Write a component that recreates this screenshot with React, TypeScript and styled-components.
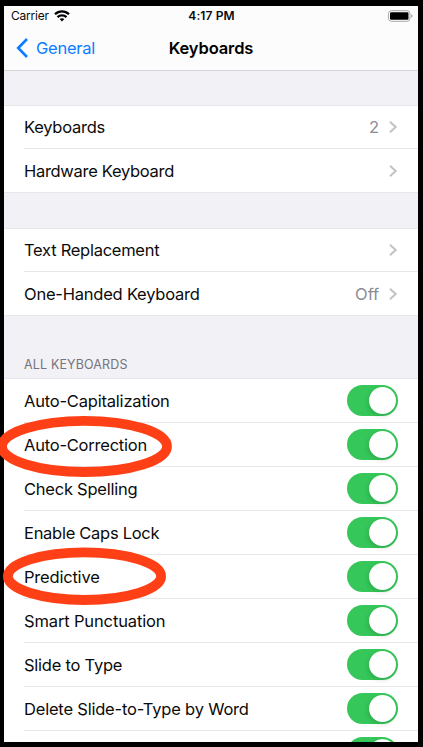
import React from "react";
import styled, { createGlobalStyle } from "styled-components";

const GlobalStyle = createGlobalStyle`
  * { box-sizing: border-box; }
  body { margin: 0; background: #000; font-family: Inter, "Liberation Sans", sans-serif; }
`;

const Frame = styled.div`
  position: relative;
  width: 423px;
  height: 747px;
  padding: 6px 5px 5px 4px;
  overflow: hidden;
  background: #000;
`;

const Screen = styled.main`
  display: flex;
  flex-direction: column;
  height: 736px;
  overflow: hidden;
  background: #f2f1f6;
  color: #0b0b0b;
`;

const Header = styled.header`
  flex: none;
  height: 65px;
  background: #fcfcfd;
  border-bottom: 1px solid #d6d5da;
`;

const StatusBar = styled.div`
  display: grid;
  grid-template-columns: 1fr auto 1fr;
  align-items: center;
  height: 20px;
  padding: 0 5px 0 7px;
`;

const Carrier = styled.div`
  display: flex;
  align-items: center;
  gap: 5px;
  font-size: 12px;
  line-height: 20px;
  letter-spacing: -0.2px;
`;

const Clock = styled.div`
  margin-left: -1px;
  font-size: 12px;
  font-weight: 600;
  line-height: 20px;
  letter-spacing: 0.1px;
`;

const Battery = styled.svg`
  justify-self: end;
`;

const NavBar = styled.nav`
  display: grid;
  grid-template-columns: 1fr auto 1fr;
  align-items: center;
  height: 44px;
  padding-left: 12px;
  padding-right: 12px;
`;

const Back = styled.div`
  display: flex;
  align-items: center;
  gap: 8px;
  font-size: 16.5px;
  line-height: 22px;
  letter-spacing: -0.25px;
  color: #0a7cff;
`;

const Title = styled.h1`
  margin: 0;
  font-size: 16.5px;
  font-weight: 600;
  line-height: 22px;
  letter-spacing: -0.12px;
  color: #000;
`;

const Group = styled.section<{ $top: number }>`
  flex: none;
  margin-top: ${(p) => p.$top}px;
  background: #fff;
  border-top: 1px solid #e7e6eb;
  border-bottom: 1px solid #e7e6eb;
`;

const SectionTitle = styled.h2`
  flex: none;
  height: 62px;
  margin: 0;
  padding: 39px 20px 0;
  font-size: 12.5px;
  font-weight: 400;
  line-height: 20px;
  letter-spacing: 0.15px;
  color: #75747a;
`;

const Row = styled.div<{ $height?: number }>`
  display: flex;
  align-items: center;
  justify-content: space-between;
  height: ${(p) => p.$height ?? 44}px;
  margin-left: 20px;
  padding-right: 20px;
  & + & { border-top: 1px solid #e7e7e9; }
`;

const Label = styled.span<{ $spacing: number }>`
  font-size: 16.5px;
  line-height: 22px;
  letter-spacing: ${(p) => p.$spacing}px;
  white-space: nowrap;
`;

const Value = styled.span`
  display: flex;
  align-items: center;
  gap: 9px;
  font-size: 16.5px;
  line-height: 22px;
  letter-spacing: -0.1px;
  color: #8b8b90;
`;

const Switch = styled.span`
  display: flex;
  justify-content: flex-end;
  width: 51px;
  height: 31px;
  padding: 2px;
  border-radius: 16px;
  background: #35c759;
`;

const Knob = styled.span`
  width: 27px;
  height: 27px;
  border-radius: 50%;
  background: #fff;
  box-shadow: -1px 2px 5px rgba(0, 0, 0, 0.15);
`;

const Ring = styled.svg`
  position: absolute;
  left: 0;
  top: 0;
  pointer-events: none;
`;

const Chevron = () => (
  <svg width="10" height="14" viewBox="0 0 10 14" fill="none" stroke="#c2c2c5" strokeWidth="2">
    <path d="M2 1.8 7.7 7 2 12.2" />
  </svg>
);

const Wifi = () => (
  <svg width="16" height="12" viewBox="0 0 16 12" fill="none" stroke="#000" strokeWidth="2.2">
    <path d="M1 4.3C4.9 .3 11.1 .3 15 4.3M3.5 7.1C6 4.7 10 4.7 12.5 7.1" />
    <path d="M5.6 9.1C7 7.8 9 7.8 10.4 9.1L8 11.5Z" fill="#000" stroke="none" />
  </svg>
);

type LinkRow = { name: string; value?: string; spacing: number; height: number };

const links: LinkRow[][] = [
  [
    { name: "Keyboards", value: "2", spacing: -0.25, height: 42 },
    { name: "Hardware Keyboard", spacing: -0.3, height: 44 },
  ],
  [
    { name: "Text Replacement", spacing: -0.27, height: 42 },
    { name: "One-Handed Keyboard", value: "Off", spacing: -0.22, height: 44 },
  ],
];

const settings = [
  { name: "Auto-Capitalization", spacing: -0.2 },
  { name: "Auto-Correction", spacing: -0.22 },
  { name: "Check Spelling", spacing: -0.24 },
  { name: "Enable Caps Lock", spacing: -0.28 },
  { name: "Predictive", spacing: -0.2 },
  { name: "Smart Punctuation", spacing: -0.14 },
  { name: "Slide to Type", spacing: -0.24 },
  { name: "Delete Slide-to-Type by Word", spacing: -0.2 },
  { name: "", spacing: 0 },
];

export default function App() {
  return (
    <>
      <GlobalStyle />
      <Frame>
        <Screen>
          <Header>
            <StatusBar>
              <Carrier>Carrier <Wifi /></Carrier>
              <Clock>4:17 PM</Clock>
              <Battery width="26" height="12" viewBox="0 0 26 12">
                <rect x="1.5" y=".7" width="21.5" height="10.6" rx="3" fill="#fff" stroke="#a7a7a8" />
                <rect x="3" y="2.2" width="18.5" height="7.6" rx="1.3" />
                <path d="M24.2 4C26 4.7 26 7.3 24.2 8Z" fill="#a7a7a8" />
              </Battery>
            </StatusBar>
            <NavBar>
              <Back>
                <svg width="12" height="20" viewBox="0 0 12 20" fill="none" stroke="#0a7cff" strokeWidth="2.6">
                  <path d="M11 1 2.2 10 11 19" />
                </svg>
                General
              </Back>
              <Title>Keyboards</Title>
            </NavBar>
          </Header>
          {links.map((rows, i) => (
            <Group key={i} $top={i === 0 ? 34 : 35}>
              {rows.map((row) => (
                <Row key={row.name} $height={row.height}>
                  <Label $spacing={row.spacing}>{row.name}</Label>
                  <Value>{row.value}<Chevron /></Value>
                </Row>
              ))}
            </Group>
          ))}
          <SectionTitle>ALL KEYBOARDS</SectionTitle>
          <Group $top={0}>
            {settings.map((row, i) => (
              <Row key={i} $height={i === 0 ? 43 : 44}>
                <Label $spacing={row.spacing}>{row.name}</Label>
                <Switch><Knob /></Switch>
              </Row>
            ))}
          </Group>
        </Screen>
        <Ring width="180" height="620" fill="none" stroke="#ff4017" strokeWidth="9.8">
          <ellipse cx="84.5" cy="446.4" rx="82.5" ry="25.6" />
          <ellipse cx="84.5" cy="576.2" rx="76.6" ry="23.8" />
        </Ring>
      </Frame>
    </>
  );
}
